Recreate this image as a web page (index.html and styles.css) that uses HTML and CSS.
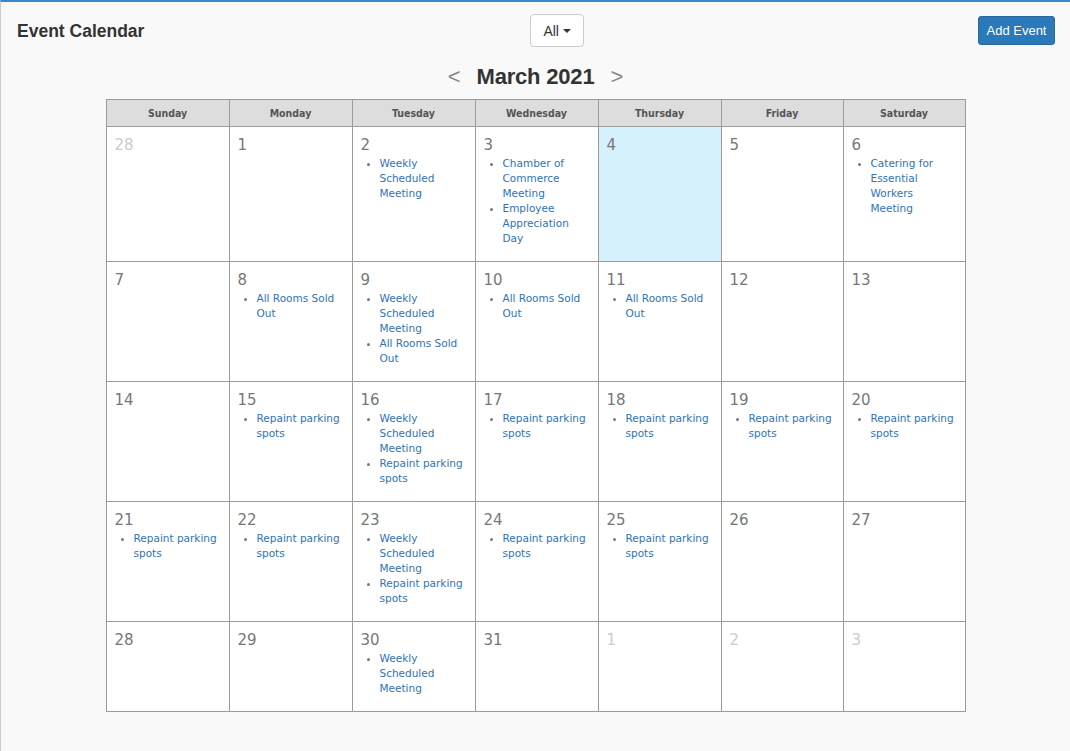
FILE: index.html
```html
<!DOCTYPE html>
<html lang="en">
<head>
<meta charset="utf-8">
<title>Event Calendar</title>
<link rel="stylesheet" href="styles.css">
</head>
<body>
<div class="page">
  <header class="topbar">
    <h1 class="app-title">Event Calendar</h1>
    <button class="filter-btn" type="button">All <span class="caret"></span></button>
    <button class="add-btn" type="button">Add Event</button>
  </header>

  <div class="month-nav">
    <span class="arrow">&lt;</span>
    <h2 class="month-title">March 2021</h2>
    <span class="arrow">&gt;</span>
  </div>

  <table class="calendar">
    <colgroup>
      <col class="col-wide"><col class="col-wide"><col class="col-wide"><col class="col-wide"><col class="col-wide"><col class="col-narrow"><col class="col-narrow">
    </colgroup>
    <thead>
      <tr>
        <th>Sunday</th><th>Monday</th><th>Tuesday</th><th>Wednesday</th><th>Thursday</th><th>Friday</th><th>Saturday</th>
      </tr>
    </thead>
    <tbody>
      <tr>
        <td><div class="num other">28</div></td>
        <td><div class="num">1</div></td>
        <td><div class="num">2</div><ul class="events"><li><a href="#">Weekly Scheduled Meeting</a></li></ul></td>
        <td><div class="num">3</div><ul class="events"><li><a href="#">Chamber of Commerce Meeting</a></li><li><a href="#">Employee Appreciation Day</a></li></ul></td>
        <td class="today"><div class="num">4</div></td>
        <td><div class="num">5</div></td>
        <td><div class="num">6</div><ul class="events"><li><a href="#">Catering for Essential Workers Meeting</a></li></ul></td>
      </tr>
      <tr>
        <td><div class="num">7</div></td>
        <td><div class="num">8</div><ul class="events"><li><a href="#">All Rooms Sold Out</a></li></ul></td>
        <td><div class="num">9</div><ul class="events"><li><a href="#">Weekly Scheduled Meeting</a></li><li><a href="#">All Rooms Sold Out</a></li></ul></td>
        <td><div class="num">10</div><ul class="events"><li><a href="#">All Rooms Sold Out</a></li></ul></td>
        <td><div class="num">11</div><ul class="events"><li><a href="#">All Rooms Sold Out</a></li></ul></td>
        <td><div class="num">12</div></td>
        <td><div class="num">13</div></td>
      </tr>
      <tr>
        <td><div class="num">14</div></td>
        <td><div class="num">15</div><ul class="events"><li><a href="#">Repaint parking spots</a></li></ul></td>
        <td><div class="num">16</div><ul class="events"><li><a href="#">Weekly Scheduled Meeting</a></li><li><a href="#">Repaint parking spots</a></li></ul></td>
        <td><div class="num">17</div><ul class="events"><li><a href="#">Repaint parking spots</a></li></ul></td>
        <td><div class="num">18</div><ul class="events"><li><a href="#">Repaint parking spots</a></li></ul></td>
        <td><div class="num">19</div><ul class="events"><li><a href="#">Repaint parking spots</a></li></ul></td>
        <td><div class="num">20</div><ul class="events"><li><a href="#">Repaint parking spots</a></li></ul></td>
      </tr>
      <tr>
        <td><div class="num">21</div><ul class="events"><li><a href="#">Repaint parking spots</a></li></ul></td>
        <td><div class="num">22</div><ul class="events"><li><a href="#">Repaint parking spots</a></li></ul></td>
        <td><div class="num">23</div><ul class="events"><li><a href="#">Weekly Scheduled Meeting</a></li><li><a href="#">Repaint parking spots</a></li></ul></td>
        <td><div class="num">24</div><ul class="events"><li><a href="#">Repaint parking spots</a></li></ul></td>
        <td><div class="num">25</div><ul class="events"><li><a href="#">Repaint parking spots</a></li></ul></td>
        <td><div class="num">26</div></td>
        <td><div class="num">27</div></td>
      </tr>
      <tr>
        <td><div class="num">28</div></td>
        <td><div class="num">29</div></td>
        <td><div class="num">30</div><ul class="events"><li><a href="#">Weekly Scheduled Meeting</a></li></ul></td>
        <td><div class="num">31</div></td>
        <td><div class="num other">1</div></td>
        <td><div class="num other">2</div></td>
        <td><div class="num other">3</div></td>
      </tr>
    </tbody>
  </table>
</div>
</body>
</html>
```
FILE: styles.css
```css
html, body {
  margin: 0;
  padding: 0;
  background: #f9f9f9;
}

.page {
  box-sizing: border-box;
  min-height: 751px;
  border-top: 2px solid #3b87c9;
  border-left: 1px solid #cccccc;
  background: #f9f9f9;
  font-family: "Liberation Sans", Arial, sans-serif;
  color: #333;
}

.topbar {
  display: flex;
  align-items: center;
  justify-content: space-between;
  padding: 12px 15px 0 16px;
}

.app-title {
  margin: 0;
  font-size: 17.5px;
  font-weight: bold;
  color: #333;
  line-height: 22px;
}

.filter-btn {
  margin-right: 8px;
  height: 33px;
  padding: 0 12px;
  background: #fff;
  border: 1px solid #cccccc;
  border-radius: 4px;
  font-family: "Liberation Sans", Arial, sans-serif;
  font-size: 14px;
  color: #333;
  display: flex;
  align-items: center;
  gap: 4px;
}

.caret {
  display: inline-block;
  width: 0;
  height: 0;
  border-top: 4px solid #333;
  border-left: 4px solid transparent;
  border-right: 4px solid transparent;
}

.add-btn {
  height: 29px;
  padding: 0 7.5px;
  background: #2a79b8;
  border: 1px solid #2a6aa1;
  border-radius: 3px;
  color: #fff;
  font-family: "Liberation Sans", Arial, sans-serif;
  font-size: 13px;
}

.month-nav {
  display: flex;
  justify-content: center;
  align-items: center;
  gap: 16px;
  margin: 17px 0 9px;
  height: 26px;
}

.arrow {
  font-size: 22px;
  color: #888;
  line-height: 26px;
}

.month-title {
  margin: 0;
  font-size: 22px;
  font-weight: bold;
  line-height: 26px;
  color: #333;
  letter-spacing: -0.2px;
}

.calendar {
  width: 860px;
  margin: 0 auto;
  border-collapse: collapse;
  table-layout: fixed;
  background: #fff;
}

.col-wide {
  width: 123px;
}

.col-narrow {
  width: 122px;
}

.calendar th,
.calendar td {
  border: 1px solid #9b9b9b;
}

.calendar th {
  height: 26px;
  padding: 0;
  background: #dddddd;
  font-family: "DejaVu Sans Condensed", "DejaVu Sans", sans-serif;
  font-weight: bold;
  font-size: 10.5px;
  color: #555;
  text-align: center;
}

.calendar td {
  vertical-align: top;
  padding: 8px 8px 7px 8px;
  background: #fff;
}

.calendar td.today {
  background: #d4f1fc;
}

.num {
  font-family: "DejaVu Sans", sans-serif;
  font-size: 15px;
  line-height: 21px;
  color: #777;
}

.num.other {
  color: #cccccc;
}

.events {
  margin: 0 0 8px;
  padding: 0 0 0 19px;
  font-family: "DejaVu Sans", sans-serif;
  font-size: 10.5px;
  line-height: 15px;
  color: #777;
}

.events a {
  color: #2f74b5;
  text-decoration: none;
}
```
